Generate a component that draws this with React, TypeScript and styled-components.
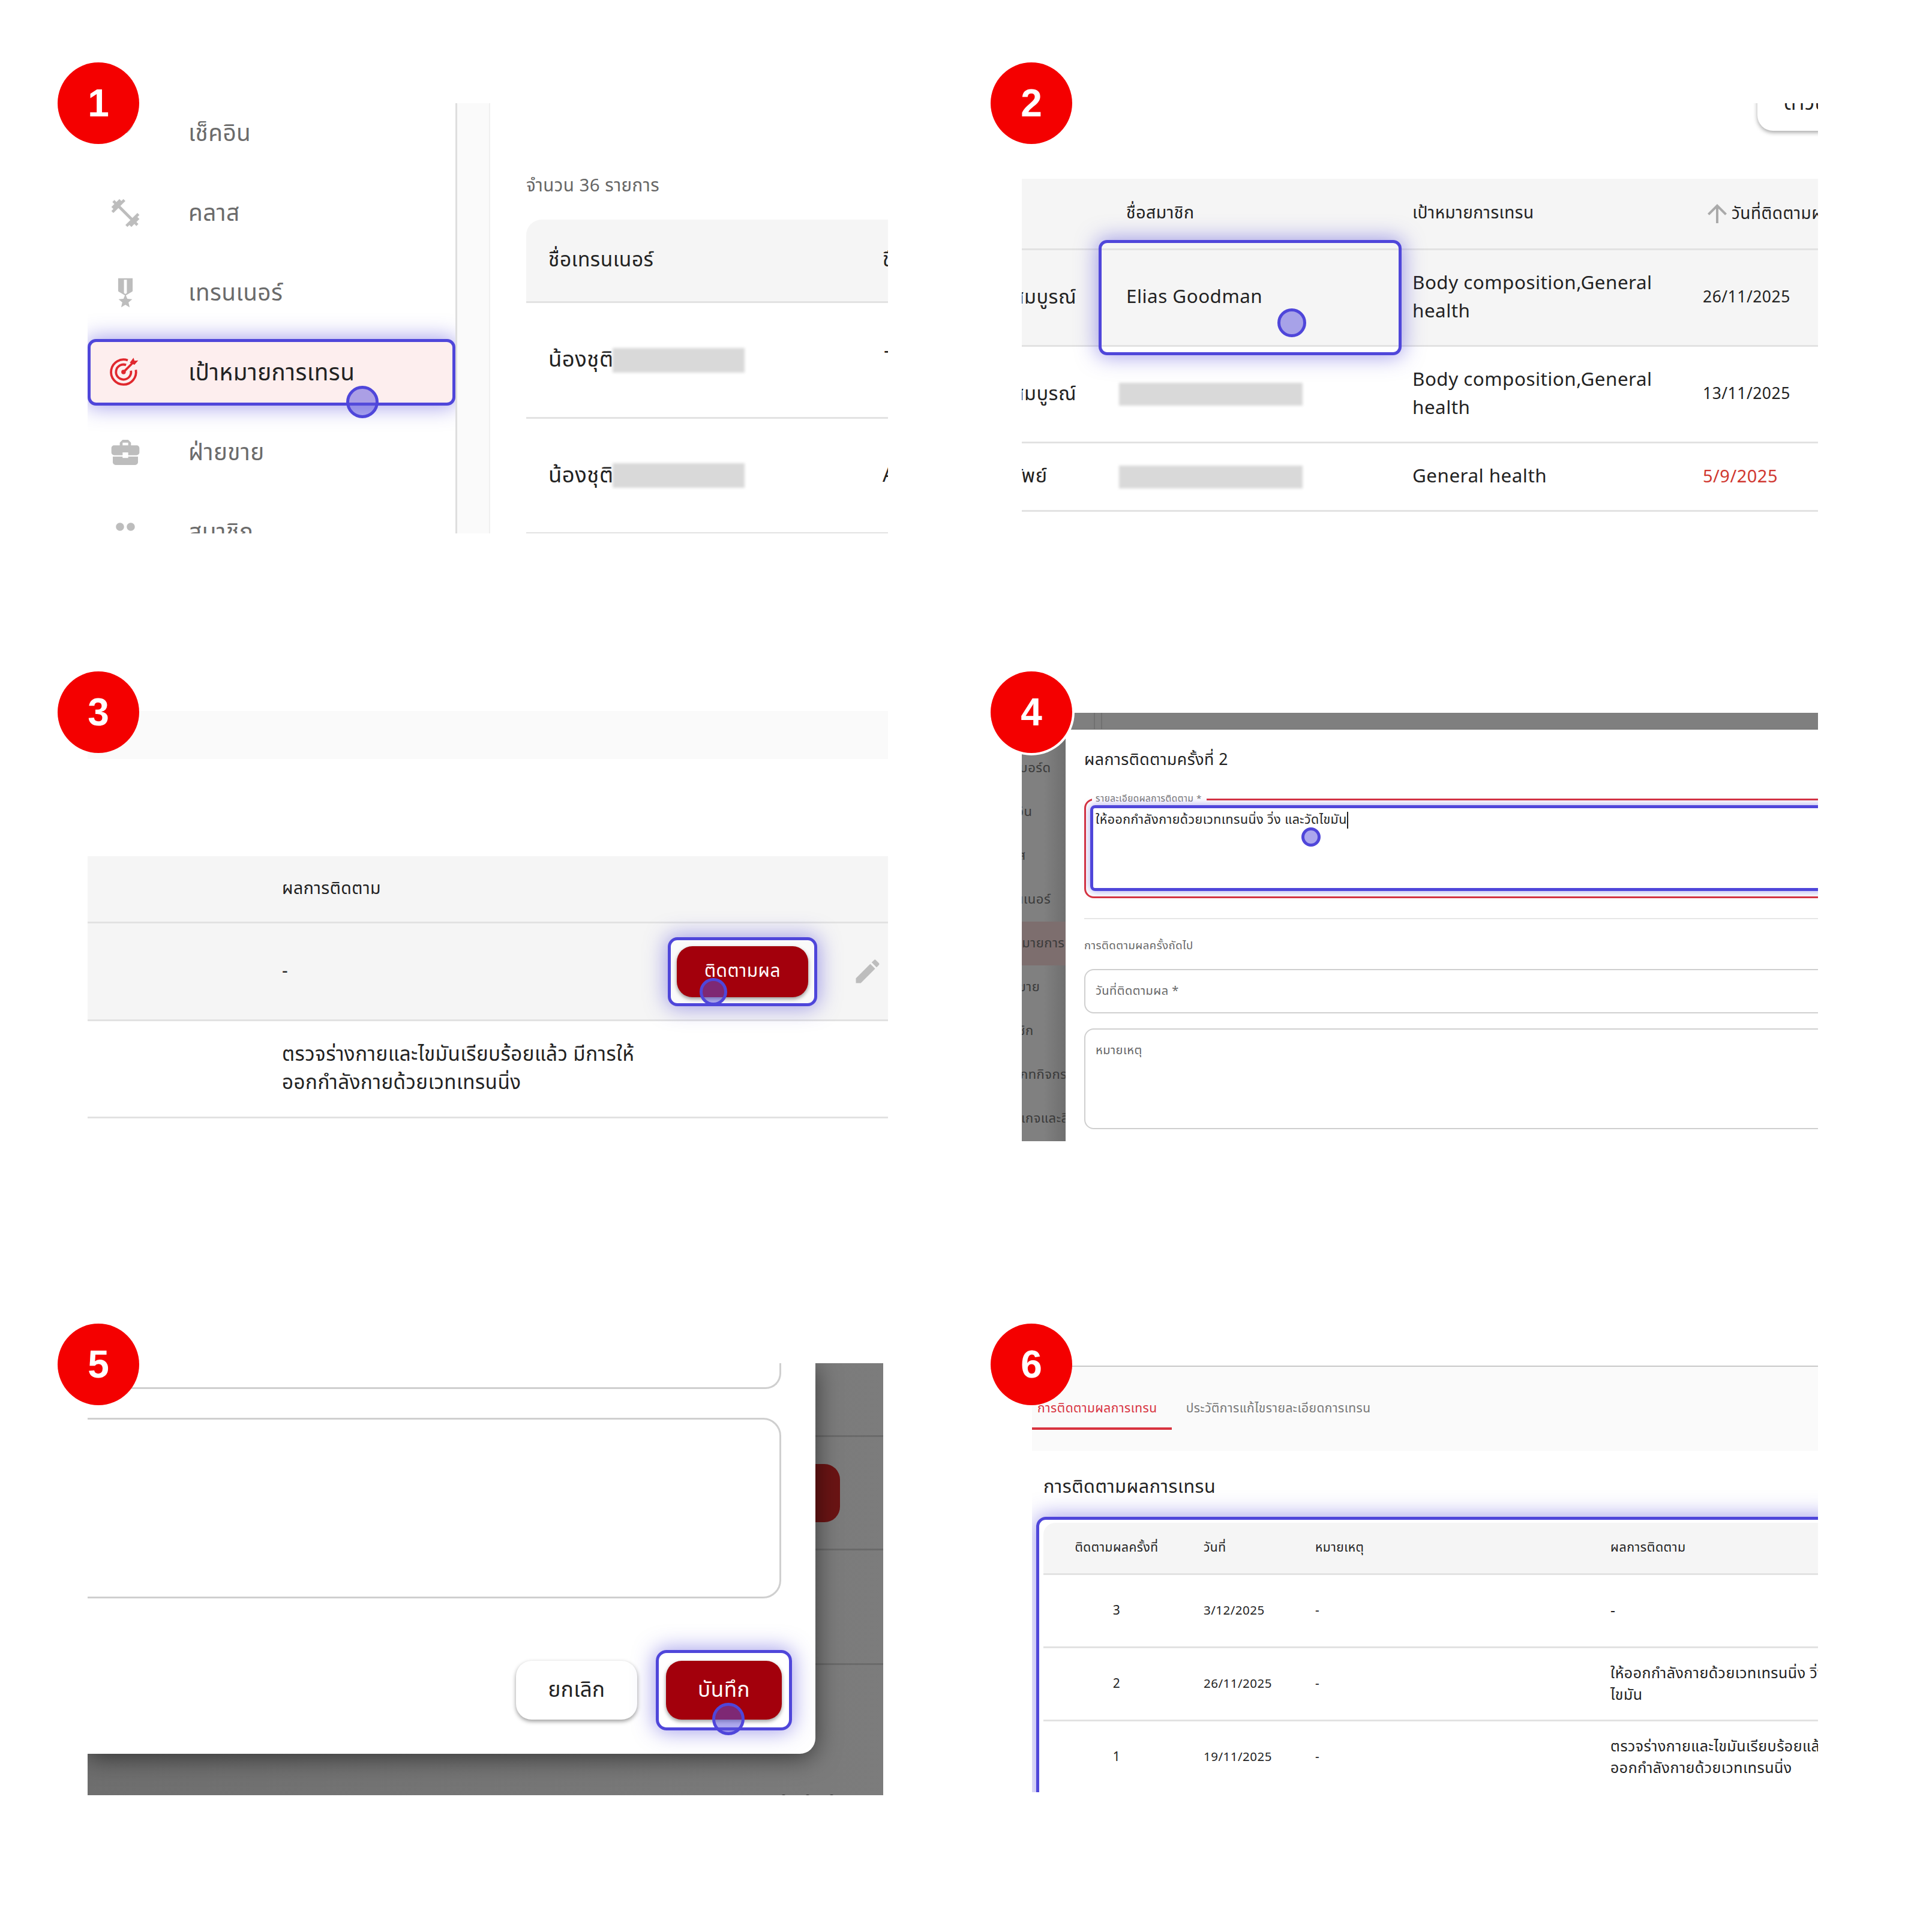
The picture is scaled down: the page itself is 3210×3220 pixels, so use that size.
import styled, { createGlobalStyle } from 'styled-components';
import { MdBusinessCenter, MdEdit, MdFitnessCenter, MdPeople, MdMilitaryTech, MdArrowUpward } from 'react-icons/md';

const INDIGO = '#4f46da';
const GLOW = '0 0 34px 3px rgba(79, 70, 218, 0.5)';

const GlobalStyle = createGlobalStyle`
  html, body { margin: 0; padding: 0; background: #fff; }
  body { font-family: "Noto Sans Thai", "Noto Sans", "Open Sans", sans-serif; color: #222; letter-spacing: 0.03em; }
  * { box-sizing: border-box; }
`;

const Page = styled.div`
  width: 3210px;
  height: 3220px;
  padding: 172px 0 0 146px;
  display: grid;
  grid-template-columns: 1557px 1327px;
  grid-template-rows: 1013px 1087px auto;
`;

const Cell = styled.section`
  position: relative;
  height: fit-content;
`;

const Badge = styled.div<{ $x: number; $y: number; $ring?: boolean }>`
  position: absolute;
  z-index: 5;
  left: ${(p) => p.$x}px;
  top: ${(p) => p.$y}px;
  width: 136px;
  height: 136px;
  border-radius: 50%;
  background: #f40000;
  color: #fff;
  font: bold 64px "Liberation Sans", Arial, sans-serif;
  letter-spacing: 0;
  display: flex;
  align-items: center;
  justify-content: center;
  box-shadow: ${(p) => (p.$ring ? '0 0 0 4px #fff' : 'none')};
`;

const Dot = styled.span<{ $x: number; $y: number; $size: number }>`
  position: absolute;
  z-index: 4;
  left: ${(p) => p.$x}px;
  top: ${(p) => p.$y}px;
  width: ${(p) => p.$size}px;
  height: ${(p) => p.$size}px;
  transform: translate(-50%, -50%);
  border-radius: 50%;
  border: 5px solid ${INDIGO};
  background: rgba(90, 80, 220, 0.5);
`;

const Panel = styled.div<{ $h: number; $w?: number; $bg?: string; $left?: number; $top?: number }>`
  height: ${(p) => p.$h}px;
  width: ${(p) => (p.$w ? `${p.$w}px` : 'auto')};
  overflow: hidden;
  background: ${(p) => p.$bg || '#fff'};
  margin-left: ${(p) => p.$left || 0}px;
  margin-top: ${(p) => p.$top || 0}px;
`;

const Blur = styled.span<{ $w: number; $h: number; $shift?: number }>`
  display: inline-block;
  width: ${(p) => p.$w}px;
  height: ${(p) => p.$h}px;
  margin-left: ${(p) => p.$shift || 0}px;
  background: #d9d9d9;
  filter: blur(2px);
`;

/* step 1 */
const SplitView = styled.div`
  display: flex;
  height: 100%;
`;

const Sidebar = styled.nav`
  width: 613px;
  flex: none;
  overflow: hidden;
  display: flex;
  flex-direction: column;
  gap: 22px;
`;

const SideItem = styled.div<{ $active?: boolean }>`
  flex: none;
  height: 111px;
  width: 613px;
  display: flex;
  align-items: center;
  font-size: 38.700px;
  color: ${(p) => (p.$active ? '#222' : '#6b6b6b')};
  border-radius: 14px;
  background: ${(p) => (p.$active ? '#fdeeee' : 'transparent')};
  border: ${(p) => (p.$active ? `5px solid ${INDIGO}` : '5px solid transparent')};
  box-shadow: ${(p) => (p.$active ? GLOW : 'none')};
  &:first-child { margin-top: -6px; }
`;

const SideLabel = styled.span`
  padding-top: 2px;
`;

const SideIcon = styled.span<{ $size?: number; $lift?: number }>`
  width: 163px;
  flex: none;
  display: flex;
  justify-content: center;
  padding-right: 48px;
  margin-top: ${(p) => -(p.$lift || 0)}px;
  color: #bdbdbd;
  font-size: ${(p) => p.$size || 50}px;
`;

const Band = styled.div`
  width: 58px;
  flex: none;
  background: #fafafa;
  border-left: 3px solid #dedede;
  border-right: 2px solid #f0f0f0;
`;

const TrainerPane = styled.div`
  flex: 1;
  padding-left: 60px;
  min-width: 0;
`;

const Count = styled.div`
  margin-top: 118px;
  margin-bottom: 36px;
  height: 40px;
  line-height: 40px;
  font-size: 29.500px;
  color: #666;
`;

const Row = styled.div<{ $cols: string; $h: number; $bg?: string; $radius?: number; $line?: string }>`
  display: grid;
  grid-template-columns: ${(p) => p.$cols};
  align-items: center;
  height: ${(p) => p.$h}px;
  background: ${(p) => p.$bg || 'transparent'};
  border-bottom: 3px solid ${(p) => p.$line || '#e2e2e2'};
  border-top-left-radius: ${(p) => p.$radius || 0}px;
  white-space: nowrap;
`;

const Text = styled.span<{ $size: number; $lh?: number; $color?: string; $pad?: number; $center?: boolean }>`
  display: block;
  font-size: ${(p) => p.$size}px;
  line-height: ${(p) => p.$lh || 44}px;
  color: ${(p) => p.$color || '#222'};
  padding-left: ${(p) => p.$pad || 0}px;
  text-align: ${(p) => (p.$center ? 'center' : 'left')};
`;

const NameCell = styled.span`
  display: flex;
  align-items: center;
`;

/* step 2 */
const TopBar = styled.div`
  height: 126px;
  display: flex;
  justify-content: flex-end;
  align-items: flex-start;
`;

const GhostButton = styled.div`
  width: 206px;
  height: 100px;
  margin-top: -54px;
  margin-right: -105px;
  padding: 10px 0 0 44px;
  display: flex;
  align-items: center;
  font-size: 33px;
  background: #fff;
  border-radius: 26px;
  box-shadow: 0 3px 7px rgba(0, 0, 0, 0.35);
`;

const ClippedName = styled.span<{ $offset: number }>`
  display: block;
  font-size: 32.500px;
  margin-left: ${(p) => p.$offset}px;
`;

const Frame = styled.div<{ $x: number; $y: number; $w: number; $h: number }>`
  position: absolute;
  z-index: 3;
  left: ${(p) => p.$x}px;
  top: ${(p) => p.$y}px;
  width: ${(p) => p.$w}px;
  height: ${(p) => p.$h}px;
  border: 5px solid ${INDIGO};
  border-radius: 14px;
  box-shadow: ${GLOW};
`;

const SortHead = styled.span`
  display: flex;
  align-items: center;
  gap: 0;
  font-size: 28px;
  color: #222;
  svg { color: #aaa; font-size: 48px; }
`;

/* step 3 */
const Strip = styled.div`
  height: 80px;
  margin-bottom: 162px;
  background: #fafafa;
`;

const FocusWrap = styled.div`
  padding: 10px;
  border: 5px solid ${INDIGO};
  border-radius: 16px;
  box-shadow: ${GLOW};
  background: #fafafa;
  height: 115px;
  display: flex;
  align-items: center;
`;

const PrimaryButton = styled.div<{ $w: number; $h: number; $size: number }>`
  width: ${(p) => p.$w}px;
  height: ${(p) => p.$h}px;
  border-radius: 26px;
  background: #a3000c;
  color: #fff;
  font-size: ${(p) => p.$size}px;
  display: flex;
  align-items: center;
  justify-content: center;
  box-shadow: 0 3px 6px rgba(0, 0, 0, 0.4);
`;

const PencilCell = styled.span`
  padding-left: 58px;
  display: flex;
  color: #bdbdbd;
  font-size: 52px;
`;

/* step 4 */
const Scrim = styled.div`
  height: 28px;
  background: #7f7f7f;
  display: flex;
  border-bottom: 1px solid #6e6e6e;
`;

const ScrimMark = styled.span`
  width: 14px;
  height: 100%;
  margin-left: 120px;
  border-left: 2px solid #717171;
  border-right: 2px solid #717171;
`;

const DialogBody = styled.div`
  display: flex;
  height: 686px;
`;

const DimNav = styled.div`
  width: 73px;
  flex: none;
  overflow: hidden;
  padding-top: 28px;
  background: linear-gradient(90deg, #808080 0 50%, #6f6f6f 100%);
`;

const DimItem = styled.div<{ $on?: boolean }>`
  height: 73px;
  display: flex;
  align-items: center;
  white-space: nowrap;
  font-size: 22px;
  color: #3a3a3a;
  background: ${(p) => (p.$on ? '#7d6e6e' : 'transparent')};
  overflow: hidden;
`;

const DimLabel = styled.span`
  margin-left: -43px;
`;

const Dialog = styled.div`
  flex: 1;
  min-width: 0;
  background: #fff;
  padding: 32px 0 0 31px;
`;

const DialogTitle = styled.div`
  font-size: 26.700px;
  line-height: 38px;
  color: #222;
  margin-bottom: 45px;
`;

const ErrorField = styled.div`
  position: relative;
  height: 166px;
  margin-right: -40px;
  border: 3px solid #d8333f;
  border-radius: 16px;
`;

const FloatLabel = styled.span`
  position: absolute;
  left: 10px;
  top: -12px;
  padding: 0 8px 0 6px;
  background: #fff;
  font-size: 15.300px;
  line-height: 20px;
  color: #777;
`;

const FieldFocus = styled.div`
  position: absolute;
  left: 7px;
  top: 8px;
  right: 0;
  bottom: 9px;
  border: 5px solid ${INDIGO};
  border-radius: 8px;
  box-shadow: 0 0 14px rgba(79, 70, 218, 0.5);
  padding: 4px 0 0 4px;
  font-size: 21.400px;
  line-height: 32px;
  color: #222;
  white-space: nowrap;
`;

const Caret = styled.span`
  display: inline-block;
  width: 2px;
  height: 28px;
  background: #222;
  vertical-align: middle;
`;

const Divider = styled.div`
  height: 2px;
  background: #e6e6e6;
  margin: 33px 0 30px;
`;

const Caption = styled.div`
  font-size: 18.500px;
  line-height: 28px;
  color: #666;
  margin-bottom: 25px;
`;

const Input = styled.div<{ $h: number; $radius: number; $gap?: number; $center?: boolean }>`
  height: ${(p) => p.$h}px;
  margin-bottom: ${(p) => p.$gap || 0}px;
  margin-right: -40px;
  border: 2px solid #cfcfcf;
  border-radius: ${(p) => p.$radius}px;
  padding: ${(p) => (p.$center ? '0' : '20px')} 0 0 17px;
  display: flex;
  align-items: ${(p) => (p.$center ? 'center' : 'flex-start')};
  font-size: 20px;
  color: #666;
`;

/* step 5 */
const BackdropView = styled.div`
  display: flex;
  height: 100%;
`;

const Modal = styled.div`
  position: relative;
  z-index: 1;
  width: 1213px;
  height: 651px;
  flex: none;
  background: #fff;
  border-bottom-right-radius: 26px;
  box-shadow: 0 6px 40px rgba(0, 0, 0, 0.55);
  padding-right: 57px;
`;

const ClippedInput = styled.div`
  height: 43px;
  margin-left: -40px;
  border: 3px solid #cfcfcf;
  border-top: none;
  border-radius: 0 0 26px 26px;
`;

const BigArea = styled.div`
  height: 301px;
  margin: 48px 0 86px -40px;
  border: 3px solid #cfcfcf;
  border-radius: 30px;
`;

const Actions = styled.div`
  display: flex;
  justify-content: flex-end;
  align-items: center;
  gap: 31px;
  margin-right: -18px;
`;

const SaveWrap = styled.div`
  height: 134px;
  padding: 0 12px;
  border: 5px solid ${INDIGO};
  border-radius: 18px;
  box-shadow: ${GLOW};
  display: flex;
  align-items: center;
`;

const CancelButton = styled.div`
  width: 202px;
  height: 98px;
  border-radius: 26px;
  background: #fff;
  font-size: 35px;
  color: #222;
  display: flex;
  align-items: center;
  justify-content: center;
  box-shadow: 0 3px 7px rgba(0, 0, 0, 0.4);
`;

const BackRows = styled.div`
  flex: 1;
  min-width: 0;
`;

const BackRow = styled.div<{ $h: number }>`
  height: ${(p) => p.$h}px;
  border-bottom: 3px solid #6a6a6a;
  display: flex;
  align-items: center;
`;

const DimButton = styled.div`
  width: 101px;
  height: 97px;
  margin-left: -60px;
  border-radius: 26px;
  background: #6a1414;
`;

const Pager = styled.div`
  display: flex;
  gap: 30px;
  margin: 216px 0 0 -58px;
`;

const PagerDot = styled.span`
  width: 10px;
  height: 10px;
  border-radius: 50%;
  background: #222;
`;

/* step 6 */
const TabBar = styled.div`
  height: 142px;
  background: #fafafa;
  border-top: 2px solid #c9c9c9;
  padding-top: 52px;
  display: flex;
  gap: 15px;
  align-items: flex-start;
`;

const Tab = styled.div<{ $on?: boolean }>`
  font-size: 21px;
  line-height: 36px;
  height: 53px;
  padding: 0 24px 0 9px;
  color: ${(p) => (p.$on ? '#d8333f' : '#777')};
  border-bottom: ${(p) => (p.$on ? '4px solid #d8333f' : 'none')};
`;

const Heading = styled.div`
  font-size: 30.600px;
  line-height: 42px;
  padding: 40px 0 0 19px;
  margin-bottom: 28px;
  color: #222;
`;

const HistoryFrame = styled.div`
  margin: 0 -30px 0 7px;
  padding: 5px 0 0 7px;
  height: 600px;
  border: 5px solid ${INDIGO};
  border-radius: 16px;
  box-shadow: ${GLOW};
`;

const HISTORY_COLS = '244px 23px 186px 492px 1fr';

const history = [
  { n: '3', date: '3/12/2025', result: ['-'] },
  { n: '2', date: '26/11/2025', result: ['ให้ออกกำลังกายด้วยเวทเทรนนิ่ง วิ่ง และวัด', 'ไขมัน'] },
  { n: '1', date: '19/11/2025', result: ['ตรวจร่างกายและไขมันเรียบร้อยแล้ว มีการให้', 'ออกกำลังกายด้วยเวทเทรนนิ่ง'] },
];

const dimNav = [
  { label: 'แดชบอร์ด' },
  { label: 'เช็คอิน' },
  { label: 'คลาส' },
  { label: 'เทรนเนอร์' },
  { label: 'เป้าหมายการเทรน', on: true },
  { label: 'ฝ่ายขาย' },
  { label: 'สมาชิก' },
  { label: 'ประเภทกิจกรรม' },
  { label: 'แพ็กเกจและสินค้า' },
];

const CheckInIcon = () => (
  <svg width="50" height="50" viewBox="0 0 24 24" fill="currentColor">
    <path d="M18.500 0.500C19 5 17 9 13 12C11 11 9 9.500 6 7L10 3Z" />
  </svg>
);

const TargetIcon = () => (
  <svg width="56" height="50" viewBox="0 0 50 48" fill="none" stroke="#e0282e" strokeWidth="3.600">
    <path d="M41.700 22.500A20 20 0 1 1 28.800 7.200" />
    <path d="M33.800 23.900A12 12 0 1 1 26.100 14.700" />
    <circle cx="22" cy="26" r="3.600" fill="#e0282e" stroke="none" />
    <path d="M22 26L37 11" />
    <path d="M32 11l6-8 1.500 5 6-.5-6 7z" fill="#e0282e" stroke="none" />
  </svg>
);

const App = () => (
  <Page>
    <GlobalStyle />

    <Cell>
      <Badge $x={-50} $y={-68}>1</Badge>
      <Dot $x={458} $y={498} $size={54} />
      <Panel $h={717} $w={1334}>
        <SplitView>
          <Sidebar>
            <SideItem><SideIcon><CheckInIcon /></SideIcon><SideLabel>เช็คอิน</SideLabel></SideItem>
            <SideItem><SideIcon $size={56}><MdFitnessCenter /></SideIcon><SideLabel>คลาส</SideLabel></SideItem>
            <SideItem><SideIcon $size={58}><MdMilitaryTech /></SideIcon><SideLabel>เทรนเนอร์</SideLabel></SideItem>
            <SideItem $active><SideIcon $lift={6}><TargetIcon /></SideIcon><SideLabel>เป้าหมายการเทรน</SideLabel></SideItem>
            <SideItem><SideIcon $size={56}><MdBusinessCenter /></SideIcon><SideLabel>ฝ่ายขาย</SideLabel></SideItem>
            <SideItem><SideIcon $size={54}><MdPeople /></SideIcon><SideLabel>สมาชิก</SideLabel></SideItem>
          </Sidebar>
          <Band />
          <TrainerPane>
            <Count>จำนวน 36 รายการ</Count>
            <Row $cols="594px 1fr" $h={139} $bg="#f5f5f5" $radius={26}>
              <Text $size={33.500} $pad={37}>ชื่อเทรนเนอร์</Text>
              <Text $size={33}>ชื่อ</Text>
            </Row>
            <Row $cols="594px 1fr" $h={193}>
              <NameCell>
                <Text $size={36.500} $pad={37}>น้องชุติ</Text>
                <Blur $w={220} $h={41} $shift={-2} />
              </NameCell>
              <Text $size={34} $pad={3}>T</Text>
            </Row>
            <Row $cols="594px 1fr" $h={192}>
              <NameCell>
                <Text $size={36.500} $pad={37}>น้องชุติ</Text>
                <Blur $w={220} $h={41} $shift={-2} />
              </NameCell>
              <Text $size={34}>A</Text>
            </Row>
          </TrainerPane>
        </SplitView>
      </Panel>
    </Cell>

    <Cell>
      <Badge $x={-52} $y={-68}>2</Badge>
      <Frame $x={128} $y={228} $w={505} $h={192} />
      <Dot $x={450} $y={366} $size={48} />
      <Panel $h={717}>
        <TopBar><GhostButton>ดาวน์โหลด</GhostButton></TopBar>
        <Row $cols="174px 477px 484px 1fr" $h={119} $bg="#f5f5f5">
          <span />
          <Text $size={28.500}>ชื่อสมาชิก</Text>
          <Text $size={28}>เป้าหมายการเทรน</Text>
          <SortHead><MdArrowUpward />วันที่ติดตามผล</SortHead>
        </Row>
        <Row $cols="174px 477px 484px 1fr" $h={161} $bg="#f5f5f5">
          <ClippedName $offset={-15}>สมบูรณ์</ClippedName>
          <Text $size={31.400}>Elias Goodman</Text>
          <Text $size={31.400} $lh={47}>Body composition,General<br />health</Text>
          <Text $size={26.500}>26/11/2025</Text>
        </Row>
        <Row $cols="174px 477px 484px 1fr" $h={161}>
          <ClippedName $offset={-15}>สมบูรณ์</ClippedName>
          <Blur $w={306} $h={38} $shift={-12} />
          <Text $size={31.400} $lh={47}>Body composition,General<br />health</Text>
          <Text $size={26.500}>13/11/2025</Text>
        </Row>
        <Row $cols="174px 477px 484px 1fr" $h={114}>
          <ClippedName $offset={-37}>ทรัพย์</ClippedName>
          <Blur $w={306} $h={38} $shift={-12} />
          <Text $size={31.400}>General health</Text>
          <Text $size={29} $color="#d0372f">5/9/2025</Text>
        </Row>
      </Panel>
    </Cell>

    <Cell>
      <Badge $x={-50} $y={-66}>3</Badge>
      <Dot $x={1043} $y={468} $size={46} />
      <Panel $h={715} $w={1334}>
        <Strip />
        <Row $cols="324px 1fr" $h={112} $bg="#f5f5f5">
          <span />
          <Text $size={28.500}>ผลการติดตาม</Text>
        </Row>
        <Row $cols="324px 643px 249px 1fr" $h={163} $bg="#f5f5f5">
          <span />
          <Text $size={30}>-</Text>
          <FocusWrap>
            <PrimaryButton $w={220} $h={85} $size={30}>ติดตามผล</PrimaryButton>
          </FocusWrap>
          <PencilCell><MdEdit /></PencilCell>
        </Row>
        <Row $cols="324px 1fr" $h={162}>
          <span />
          <Text $size={33.200} $lh={47}>ตรวจร่างกายและไขมันเรียบร้อยแล้ว มีการให้<br />ออกกำลังกายด้วยเวทเทรนนิ่ง</Text>
        </Row>
      </Panel>
    </Cell>

    <Cell>
      <Badge $x={-52} $y={-66} $ring>4</Badge>
      <Dot $x={482} $y={210} $size={32} />
      <Panel $h={714} $top={3} $bg="#7f7f7f">
        <Scrim><ScrimMark /></Scrim>
        <DialogBody>
          <DimNav>
            {dimNav.map((item) => (
              <DimItem key={item.label} $on={item.on}>
                <DimLabel>{item.label}</DimLabel>
              </DimItem>
            ))}
          </DimNav>
          <Dialog>
            <DialogTitle>ผลการติดตามครั้งที่ 2</DialogTitle>
            <ErrorField>
              <FloatLabel>รายละเอียดผลการติดตาม *</FloatLabel>
              <FieldFocus>ให้ออกกำลังกายด้วยเวทเทรนนิ่ง วิ่ง และวัดไขมัน<Caret /></FieldFocus>
            </ErrorField>
            <Divider />
            <Caption>การติดตามผลครั้งถัดไป</Caption>
            <Input $h={74} $radius={16} $gap={25} $center>วันที่ติดตามผล *</Input>
            <Input $h={168} $radius={16}>หมายเหตุ</Input>
          </Dialog>
        </DialogBody>
      </Panel>
    </Cell>

    <Cell>
      <Badge $x={-50} $y={-66}>5</Badge>
      <Dot $x={1068} $y={593} $size={54} />
      <Panel $h={720} $w={1326} $bg="linear-gradient(90deg, #6e6e6e, #7c7c7c)">
        <BackdropView>
          <Modal>
            <ClippedInput />
            <BigArea />
            <Actions>
              <CancelButton>ยกเลิก</CancelButton>
              <SaveWrap>
                <PrimaryButton $w={193} $h={98} $size={35}>บันทึก</PrimaryButton>
              </SaveWrap>
            </Actions>
          </Modal>
          <BackRows>
            <BackRow $h={123} />
            <BackRow $h={189}><DimButton /></BackRow>
            <BackRow $h={191} />
            <Pager><PagerDot /><PagerDot /><PagerDot /></Pager>
          </BackRows>
        </BackdropView>
      </Panel>
    </Cell>

    <Cell>
      <Badge $x={-52} $y={-66}>6</Badge>
      <Panel $h={711} $left={17} $top={4}>
        <TabBar>
          <Tab $on>การติดตามผลการเทรน</Tab>
          <Tab>ประวัติการแก้ไขรายละเอียดการเทรน</Tab>
        </TabBar>
        <Heading>การติดตามผลการเทรน</Heading>
        <HistoryFrame>
          <Row $cols={HISTORY_COLS} $h={87} $bg="#f5f5f5" $radius={20}>
            <Text $size={21} $center>ติดตามผลครั้งที่</Text>
            <span />
            <Text $size={21}>วันที่</Text>
            <Text $size={21}>หมายเหตุ</Text>
            <Text $size={21.500}>ผลการติดตาม</Text>
          </Row>
          {history.map((h) => (
            <Row key={h.n} $cols={HISTORY_COLS} $h={122}>
              <Text $size={21} $center>{h.n}</Text>
              <span />
              <Text $size={20.500}>{h.date}</Text>
              <Text $size={21}>-</Text>
              <Text $size={25} $lh={36}>
                {h.result.map((line) => (
                  <div key={line}>{line}</div>
                ))}
              </Text>
            </Row>
          ))}
        </HistoryFrame>
      </Panel>
    </Cell>
  </Page>
);

export default App;
